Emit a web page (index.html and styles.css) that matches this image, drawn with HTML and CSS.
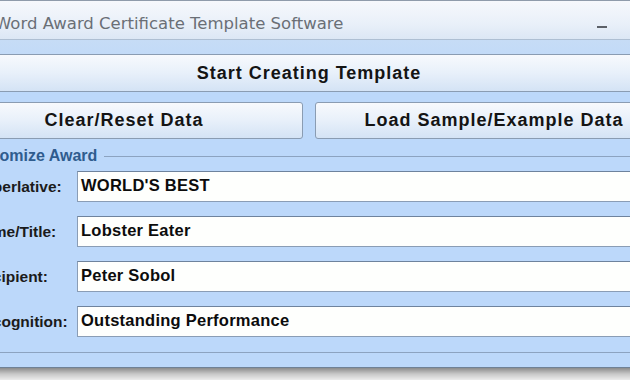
FILE: index.html
```html
<!DOCTYPE html>
<html>
<head>
<meta charset="utf-8">
<link rel="stylesheet" href="styles.css">
</head>
<body>
<div class="window">
  <div class="titlebar">
    <span class="title">Word Award Certificate Template Software</span>
    <span class="min"></span>
  </div>
  <div class="content">
    <button class="btn btn-wide">Start Creating Template</button>
    <div class="btn-row">
      <button class="btn">Clear/Reset Data</button>
      <button class="btn">Load Sample/Example Data</button>
    </div>
    <div class="group">
      <div class="legend"><span class="legend-text">Customize Award</span><span class="legend-line"></span></div>
      <div class="rows">
        <div class="row"><span class="label">Superlative:</span><div class="field">WORLD'S BEST</div></div>
        <div class="row"><span class="label">Name/Title:</span><div class="field">Lobster Eater</div></div>
        <div class="row"><span class="label">Recipient:</span><div class="field">Peter Sobol</div></div>
        <div class="row"><span class="label">Recognition:</span><div class="field">Outstanding Performance</div></div>
      </div>
    </div>
  </div>
</div>
<div class="shadow"></div>
</body>
</html>
```
FILE: styles.css
```css
html, body {
  margin: 0;
  padding: 0;
  width: 630px;
  height: 380px;
  overflow: hidden;
  background: #e9e9e9;
}
.window {
  margin-left: -63px;
  width: 744px;
  background: #bcd8fa;
  border-top: 1px solid #8f9bab;
  border-bottom: 1px solid #6f8196;
  font-family: "Liberation Sans", Arial, sans-serif;
}
.titlebar {
  height: 38px;
  display: flex;
  align-items: center;
  padding-left: 58px;
  padding-right: 73px;
  background: linear-gradient(#f6f8fc, #e9f0f9 60%, #dce7f5);
  border-bottom: 1px solid #aebfd3;
}
.title {
  flex: 1;
  font-family: "DejaVu Sans", sans-serif;
  font-size: 16.5px;
  color: #6a6f76;
  padding-top: 7px;
}
.min {
  width: 10px;
  height: 2px;
  background: #5c6168;
  margin-top: 14px;
  margin-right: 1px;
}
.content {
  padding: 14px 8px 14px 8px;
  background: linear-gradient(#c6dcf6, #bcd8fa 40px);
}
.btn {
  display: block;
  box-sizing: border-box;
  width: 100%;
  height: 38px;
  margin: 0;
  padding: 0;
  border: 1px solid #8a9cb2;
  border-radius: 3px;
  background: linear-gradient(#f7f9fd, #e8f0fa 50%, #d4e3f5);
  font-family: "Liberation Sans", Arial, sans-serif;
  font-weight: bold;
  font-size: 18px;
  color: #141414;
  letter-spacing: 1px;
}
.btn-row {
  display: flex;
  gap: 12px;
  margin-top: 10px;
}
.btn-row .btn {
  flex: 1;
  height: 37px;
}
.group {
  margin-top: 9px;
  border-bottom: 1px solid #8ca3c0;
  padding-bottom: 15px;
}
.legend {
  display: flex;
  align-items: center;
  height: 16px;
}
.legend-text {
  padding-left: 19px;
  font-weight: bold;
  font-size: 16px;
  color: #2f5c8e;
  padding-right: 7px;
}
.legend-line {
  flex: 1;
  height: 1px;
  background: #8ca3c0;
}
.rows {
  margin-top: 7px;
  display: flex;
  flex-direction: column;
  gap: 14px;
}
.row {
  display: flex;
  align-items: center;
}
.label {
  width: 104px;
  padding-left: 28px;
  font-weight: bold;
  font-size: 15.5px;
  color: #1b1b1b;
}
.field {
  flex: 1;
  box-sizing: border-box;
  height: 31px;
  background: #fefffd;
  border: 1px solid #8a9db5;
  border-top-color: #6e839d;
  padding: 4px 0 0 3px;
  font-weight: bold;
  font-size: 16.5px;
  letter-spacing: 0.25px;
  color: #0c0c0c;
}
.shadow {
  height: 12px;
  background: linear-gradient(#8c8c8c, #c8c8c8 50%, #ececec);
}
```
